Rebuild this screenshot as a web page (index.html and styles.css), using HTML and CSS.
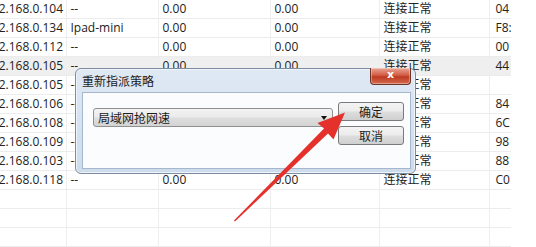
FILE: index.html
```html
<!DOCTYPE html>
<html lang="zh-CN">
  <head>
    <meta charset="UTF-8" />
    <meta name="viewport" content="width=device-width, initial-scale=1.0" />
    <title>重新指派策略</title>
    <link rel="stylesheet" href="styles.css">
  </head>
  <body>
    <table class="hosts">
      <colgroup>
        <col class="c-ip"><col class="c-name"><col class="c-up"><col class="c-down"><col class="c-state"><col class="c-mac">
      </colgroup>
      <tr><td>192.168.0.104</td><td>--</td><td>0.00</td><td>0.00</td><td>连接正常</td><td>04</td></tr>
      <tr><td>192.168.0.134</td><td>Ipad-mini</td><td>0.00</td><td>0.00</td><td>连接正常</td><td>F8:</td></tr>
      <tr><td>192.168.0.112</td><td>--</td><td>0.00</td><td>0.00</td><td>连接正常</td><td>00</td></tr>
      <tr class="selected"><td>192.168.0.105</td><td>--</td><td>0.00</td><td>0.00</td><td>连接正常</td><td>44</td></tr>
      <tr><td>192.168.0.105</td><td>--</td><td>0.00</td><td>0.00</td><td>连接正常</td><td></td></tr>
      <tr><td>192.168.0.106</td><td>--</td><td>0.00</td><td>0.00</td><td>连接正常</td><td>84</td></tr>
      <tr><td>192.168.0.108</td><td>--</td><td>0.00</td><td>0.00</td><td>连接正常</td><td>6C</td></tr>
      <tr><td>192.168.0.109</td><td>--</td><td>0.00</td><td>0.00</td><td>连接正常</td><td>98</td></tr>
      <tr><td>192.168.0.103</td><td>--</td><td>0.00</td><td>0.00</td><td>连接正常</td><td>88</td></tr>
      <tr><td>192.168.0.118</td><td>--</td><td>0.00</td><td>0.00</td><td>连接正常</td><td>C0</td></tr>
      <tr><td></td><td></td><td></td><td></td><td></td><td></td></tr>
      <tr><td></td><td></td><td></td><td></td><td></td><td></td></tr>
      <tr><td></td><td></td><td></td><td></td><td></td><td></td></tr>
    </table>

    <div class="dialog">
      <div class="title-bar">
        <span class="title">重新指派策略</span>
        <button class="close">x</button>
      </div>
      <div class="panel">
        <div class="combo">
          <span>局域网抢网速</span>
          <span class="caret"></span>
        </div>
        <div class="actions">
          <button class="btn">确定</button>
          <button class="btn">取消</button>
        </div>
      </div>
    </div>

    <svg class="arrow" width="536" height="247" viewBox="0 0 536 247">
      <polygon fill="#e5312c" points="235,221.5 234,220.5 324,128.5 317.5,123 345,112.5 333.5,139.5 328,133.5" />
    </svg>
  </body>
</html>
```

FILE: styles.css
```css
body {
  margin: 0;
  width: 536px;
  height: 247px;
  overflow: hidden;
  position: relative;
  background: #fff;
  font-family: "Open Sans", "Noto Sans CJK SC", sans-serif;
  font-size: 12px;
  color: #222;
}

.hosts {
  border-collapse: collapse;
  table-layout: fixed;
  margin-left: -16px;
  width: 527px;
}

.c-ip { width: 82px; }
.c-name { width: 92px; }
.c-up { width: 112px; }
.c-down { width: 109px; }
.c-state { width: 110px; }
.c-mac { width: 22px; }

.hosts td {
  height: 18px;
  padding: 0 0 0 4px;
  border-bottom: 1px solid #ececec;
  border-right: 1px solid #eeeeee;
  white-space: nowrap;
  overflow: hidden;
  line-height: 18px;
}

.hosts td:first-child {
  padding-left: 1px;
}

.hosts td:last-child {
  padding-left: 6px;
  border-right: none;
}

.hosts .selected td {
  background: #efefef;
}

/* dialog */
.dialog {
  position: absolute;
  left: 75px;
  top: 68px;
  width: 341px;
  height: 106px;
  box-sizing: border-box;
  border: 1px solid #7d8da1;
  border-radius: 6px;
  background: linear-gradient(#dfe9f4, #cddcec);
  box-shadow: inset 0 0 0 1px #eef4fa;
  padding: 0 4px 4px 6px;
  display: flex;
  flex-direction: column;
}

.title-bar {
  height: 23px;
  display: flex;
  justify-content: space-between;
  align-items: flex-start;
}

.title {
  margin-top: 3px;
  font-size: 12px;
  color: #1c1c1c;
}

.close {
  width: 41px;
  height: 17px;
  margin: -1px 0 0 0;
  padding: 0 0 2px;
  border: 1px solid #6e3327;
  border-top: none;
  border-radius: 0 0 4px 4px;
  background: linear-gradient(#eaa696, #d25c45 45%, #be3a20 55%, #d46a4f);
  color: #fff;
  font-family: "DejaVu Sans", sans-serif;
  font-weight: bold;
  font-size: 11px;
  line-height: 14px;
  box-shadow: inset 0 0 0 1px rgba(255, 255, 255, 0.35);
}

.panel {
  flex: 1;
  background: #fbfcfd;
  border: 1px solid #a5b7cc;
  padding: 9px 6px 0 10px;
  display: flex;
  gap: 5px;
}

.combo {
  width: 240px;
  height: 19px;
  margin-top: 6px;
  box-sizing: border-box;
  border: 1px solid #8f9091;
  border-radius: 3px;
  background: linear-gradient(#f3f3f3, #ebebeb 45%, #dedede 55%, #d3d3d3);
  display: flex;
  justify-content: space-between;
  align-items: center;
  padding: 0 5px 0 4px;
  font-size: 12px;
  color: #1c1c1c;
}

.caret {
  width: 0;
  height: 0;
  border-left: 3px solid transparent;
  border-right: 3px solid transparent;
  border-top: 4px solid #111;
}

.actions {
  display: flex;
  flex-direction: column;
  gap: 5px;
}

.btn {
  width: 66px;
  height: 19px;
  padding: 0;
  border: 1px solid #7a7a7a;
  border-radius: 3px;
  background: linear-gradient(#f4f4f4, #ececec 45%, #dddddd 55%, #cfcfcf);
  font-family: "Noto Sans CJK SC", sans-serif;
  font-size: 12px;
  line-height: 16px;
  color: #1c1c1c;
}

.arrow {
  position: absolute;
  left: 0;
  top: 0;
}
```
